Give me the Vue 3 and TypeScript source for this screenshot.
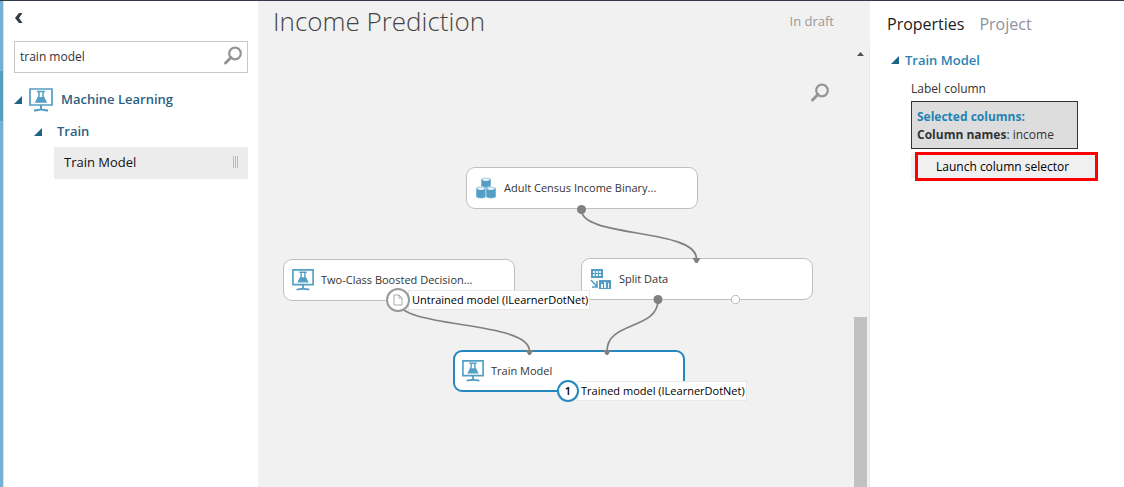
<script setup lang="ts">
import { ref } from 'vue'

interface FlowNode {
  id: string
  title: string
  icon: 'data' | 'model' | 'split'
  x: number
  y: number
  selected?: boolean
}

const query = ref('train model')
const activeTab = ref('Properties')
const tabs: string[] = ['Properties', 'Project']

const nodes: FlowNode[] = [
  { id: 'census', title: 'Adult Census Income Binary...', icon: 'data', x: 208, y: 121 },
  { id: 'boosted', title: 'Two-Class Boosted Decision...', icon: 'model', x: 25, y: 213 },
  { id: 'split', title: 'Split Data', icon: 'split', x: 323, y: 212 },
  { id: 'train', title: 'Train Model', icon: 'model', x: 195, y: 304, selected: true },
]

const wires: string[] = [
  'M323.500 164C323.500 192 438.500 182 438.500 213',
  'M140 255C140 283 271.500 274 271.500 305',
  'M400 254C400 284 349 275 349 305',
]
const arrows: string[] = ['M434.500 212h8l-3 5h-2z', 'M267.500 304h8l-3 5h-2z', 'M345 304h8l-3 5h-2z']
</script>

<template>
  <div class="app">
    <div class="rail"><span class="rail-mark"></span></div>

    <aside class="palette">
      <button class="collapse" type="button" aria-label="Collapse">
        <svg width="8" height="12" viewBox="0 0 8 12"><path d="M4 1h3.500L4 6l3.500 5H4L0 6z" fill="#333a45" /></svg>
      </button>
      <div class="search">
        <input v-model="query" type="text" aria-label="Search modules" />
        <svg width="20" height="20" viewBox="0 0 20 20" fill="none" stroke="#959595">
          <circle cx="12" cy="7.500" r="5.800" stroke-width="2.200" />
          <path d="M8 11.500L2.500 17" stroke-width="3" stroke-linecap="round" />
        </svg>
      </div>
      <button class="branch" type="button">
        <svg class="caret" width="8" height="8" viewBox="0 0 8 8"><path d="M8 0v8H0z" fill="#1b6488" /></svg>
        <svg width="24" height="24" viewBox="0 0 24 24" fill="none" stroke="#549ec4">
          <path d="M1 1h22v16H1z" stroke-width="1.700" />
          <path d="M12 17v5M5 22.500c3 0 4-1 7-1s4 1 7 1" stroke-width="2" />
          <path d="M8 3.500h8M10 4v4l-3 6h10l-3-6V4" stroke-width="1.500" />
          <path d="M9.500 9h5l2.500 5H7z" fill="#549ec4" stroke="none" />
        </svg>
        <span>Machine Learning</span>
      </button>
      <button class="branch child" type="button">
        <svg class="caret" width="8" height="8" viewBox="0 0 8 8"><path d="M8 0v8H0z" fill="#1b6488" /></svg>
        <span>Train</span>
      </button>
      <button class="leaf" type="button">
        <span>Train Model</span>
        <span class="grip"></span>
      </button>
    </aside>

    <main class="workspace">
      <header class="heading">
        <h1>Income Prediction</h1>
        <span class="status">In draft</span>
      </header>
      <div class="body">
        <div class="stage">
          <button class="find" type="button" aria-label="Zoom">
            <svg width="20" height="20" viewBox="0 0 20 20" fill="none" stroke="#959595">
              <circle cx="12" cy="7.500" r="5.800" stroke-width="2.200" />
              <path d="M8 11.500L2.500 17" stroke-width="3" stroke-linecap="round" />
            </svg>
          </button>

          <div
            v-for="node in nodes"
            :key="node.id"
            class="node"
            :class="{ selected: node.selected }"
            :style="{ left: node.x + 'px', top: node.y + 'px' }"
          >
            <svg v-if="node.icon === 'model'" width="22" height="22" viewBox="0 0 24 24" fill="none" stroke="#549ec4">
              <path d="M1 1h22v16H1z" stroke-width="1.800" />
              <path d="M12 17v5M5 22.500c3 0 4-1 7-1s4 1 7 1" stroke-width="2" />
              <path d="M8 3.500h8M10 4v4l-3 6h10l-3-6V4" stroke-width="1.500" />
              <path d="M9.500 9h5l2.500 5H7z" fill="#549ec4" stroke="none" />
            </svg>
            <svg v-else-if="node.icon === 'data'" width="22" height="22" viewBox="0 0 22 22">
              <g v-for="(p, i) in [[6, 0], [1, 9], [11, 9]]" :key="i" :transform="`translate(${p[0]} ${p[1]})`">
                <path d="M0 2.500C0 0 10 0 10 2.500v8c0 2.500-10 2.500-10 0z" fill="#549ec4" stroke="#fff" stroke-width=".5" />
                <ellipse cx="5" cy="2.600" rx="3.800" ry="1.400" fill="#e9f4fa" />
              </g>
            </svg>
            <svg v-else width="22" height="22" viewBox="0 0 22 22">
              <path d="M1 1h12v9H1zM9 12h12v9H9z" fill="#549ec4" />
              <path d="M3 3h2v2H3zM6 3h2v2H6zM9 3h2v2H9zM3 6h2v2H3zM6 6h2v2H6zM9 6h2v2H9zM11 16h2v4h-2zM14 14h2v6h-2zM18 15h1v5h-1z" fill="#e9f4fa" />
              <path d="M1 12l5.500 6M7 13v6H2" fill="none" stroke="#549ec4" stroke-width="1.600" />
            </svg>
            <span>{{ node.title }}</span>
          </div>

          <svg class="wires" width="600" height="440" viewBox="0 0 600 440">
            <path v-for="d in wires" :key="d" :d="d" fill="none" stroke="#808080" stroke-width="1.700" />
            <path v-for="d in arrows" :key="d" :d="d" fill="#808080" />
            <circle cx="323.500" cy="163.500" r="4.500" fill="#808080" />
            <circle cx="400" cy="253.500" r="4.500" fill="#808080" />
            <circle cx="477.500" cy="253.500" r="4.200" fill="#fff" stroke="#b8b8b8" />
          </svg>

          <div class="port untrained">
            <span class="port-dot">
              <svg width="10" height="12" viewBox="0 0 10 12" fill="none" stroke="#aaa">
                <path d="M1 1h5l3 3v7H1zM6 1v3h3" />
              </svg>
            </span>
            <span class="port-label">Untrained model (ILearnerDotNet)</span>
          </div>
          <div class="port trained">
            <span class="port-dot">1</span>
            <span class="port-label">Trained model (ILearnerDotNet)</span>
          </div>
        </div>
        <div class="scrollbar">
          <svg width="7" height="4" viewBox="0 0 7 4"><path d="M0 4L3.500 0 7 4z" fill="#505050" /></svg>
          <span class="thumb"></span>
        </div>
      </div>
    </main>

    <aside class="properties">
      <nav class="tabs">
        <button
          v-for="tab in tabs"
          :key="tab"
          type="button"
          :class="{ active: tab === activeTab }"
          @click="activeTab = tab"
        >{{ tab }}</button>
      </nav>
      <button class="section" type="button">
        <svg width="8" height="8" viewBox="0 0 8 8"><path d="M8 0v8H0z" fill="#1b6488" /></svg>
        <span>Train Model</span>
      </button>
      <div class="field">
        <div class="field-name">Label column</div>
        <div class="summary">
          <div class="summary-title">Selected columns:</div>
          <div><b>Column names</b>: income</div>
        </div>
        <div class="launch-row">
          <button class="launch" type="button">Launch column selector</button>
          <span class="highlight"></span>
        </div>
      </div>
    </aside>
  </div>
</template>

<style>
body {
  background: #fff;
}
</style>

<style scoped>
.app {
  display: flex;
  box-sizing: border-box;
  min-height: 100vh;
  border-top: 1px solid #323844;
  font-family: "Open Sans", "Noto Sans", sans-serif;
  font-size: 12px;
  line-height: 18px;
  color: #333;
}
.app * {
  box-sizing: border-box;
}
button {
  margin: 0;
  padding: 0;
  border: 0;
  background: none;
  font: inherit;
  color: inherit;
  text-align: left;
}
svg {
  flex: none;
  display: block;
}
.rail {
  width: 4px;
  padding-top: 70px;
  background: #73b2d4;
  border-right: 1px solid #d5e3eb;
}
.rail-mark {
  display: block;
  height: 50px;
  background: #549ec0;
}
.palette {
  display: flex;
  flex-direction: column;
  width: 254px;
  padding: 11px 10px 0;
}
.collapse {
  align-self: flex-start;
  padding-left: 1px;
}
.search {
  display: flex;
  align-items: center;
  height: 32px;
  margin-top: 17px;
  padding: 0 4px 0 5px;
  border: 1px solid #c8c8c8;
}
.search svg {
  margin-bottom: 2px;
}
.search input {
  flex: 1;
  min-width: 0;
  padding: 0;
  border: 0;
  outline: 0;
  background: none;
  font: inherit;
  color: #333;
}
.branch {
  display: flex;
  align-items: center;
  margin-top: 15px;
  font-size: 13px;
  font-weight: 600;
  color: #2b5f82;
}
.branch .caret {
  margin-right: 7px;
}
.branch span {
  margin: 0 0 2px 8px;
}
.branch.child {
  margin: 10px 0 0 20px;
}
.leaf {
  display: flex;
  align-items: center;
  justify-content: space-between;
  height: 32px;
  margin: 5px 0 0 40px;
  padding: 0 10px 2px;
  background: #ececec;
  font-size: 13px;
  color: #111;
}
.grip {
  width: 5px;
  height: 12px;
  border: solid #bbb;
  border-width: 0 1px;
  background: linear-gradient(90deg, transparent 1px, #bbb 1px, #bbb 2px, transparent 2px);
}
.workspace {
  display: flex;
  flex: 1;
  flex-direction: column;
  min-width: 0;
  background: #f1f1f1;
}
.heading {
  display: flex;
  align-items: center;
  justify-content: space-between;
  height: 45px;
  padding: 0 36px 6px 15px;
}
h1 {
  margin: 0;
  font-size: 26px;
  line-height: 36px;
  font-weight: 300;
  color: #444;
}
.status {
  font-size: 13px;
  color: #999;
}
.body {
  display: flex;
  flex: 1;
}
.stage {
  position: relative;
  flex: 1;
}
.find {
  position: absolute;
  top: 37px;
  right: 22px;
}
.node {
  position: absolute;
  display: flex;
  align-items: center;
  gap: 7px;
  width: 232px;
  height: 42px;
  padding: 0 7px 0 8px;
  border: 1px solid #bfbfbf;
  border-radius: 9px;
  background: #fff;
  font-size: 11px;
  white-space: nowrap;
}
.node.selected {
  padding-left: 7px;
  border: 2px solid #2488bf;
}
.wires {
  position: absolute;
  top: 0;
  left: 0;
}
.port {
  position: absolute;
  display: flex;
  align-items: center;
  font-size: 11px;
  white-space: nowrap;
  color: #000;
}
.untrained {
  left: 128px;
  top: 242px;
}
.trained {
  left: 299px;
  top: 334px;
}
.port-dot {
  z-index: 1;
  display: flex;
  align-items: center;
  justify-content: center;
  width: 24px;
  height: 24px;
  border: 2px solid #999;
  border-radius: 50%;
  background: #fff;
}
.trained .port-dot {
  width: 22px;
  height: 22px;
  border-color: #2488bf;
  font-weight: 600;
}
.port-label {
  margin-left: -2px;
  padding: 0 1px 0 3px;
  border: 1px solid #e8e8e8;
  background: #fff;
}
.scrollbar {
  display: flex;
  flex-direction: column;
  align-items: center;
  width: 18px;
  padding: 6px 2px 0;
  border-right: 1px solid #e8e8e8;
}
.thumb {
  flex: 1;
  width: 13px;
  margin-top: 261px;
  background: #c1c1c1;
}
.properties {
  width: 254px;
  padding: 12px 17px;
}
.tabs {
  display: flex;
  gap: 15px;
  font-size: 16px;
  line-height: 22px;
  color: #8d929c;
}
.tabs .active {
  color: #222;
}
.section {
  display: flex;
  align-items: center;
  gap: 6px;
  margin: 16px 0 0 4px;
  font-size: 13px;
  font-weight: 600;
  color: #2b82b2;
}
.field {
  margin: 11px 0 0 24px;
}
.summary {
  width: 167px;
  margin-top: 3px;
  padding: 6px 5px 4px;
  border: 1px solid #333;
  background: #ddd;
}
.summary-title {
  font-weight: 700;
  color: #2583b3;
}
.launch-row {
  position: relative;
  width: 187px;
  margin-top: 5px;
}
.launch {
  display: block;
  width: 100%;
  height: 24px;
  padding: 1px 0 0 25px;
  background: #f0f0f0;
  color: #000;
}
.highlight {
  position: absolute;
  inset: -2px 0 -3px 4px;
  border: 3px solid #f00;
  pointer-events: none;
}
</style>
